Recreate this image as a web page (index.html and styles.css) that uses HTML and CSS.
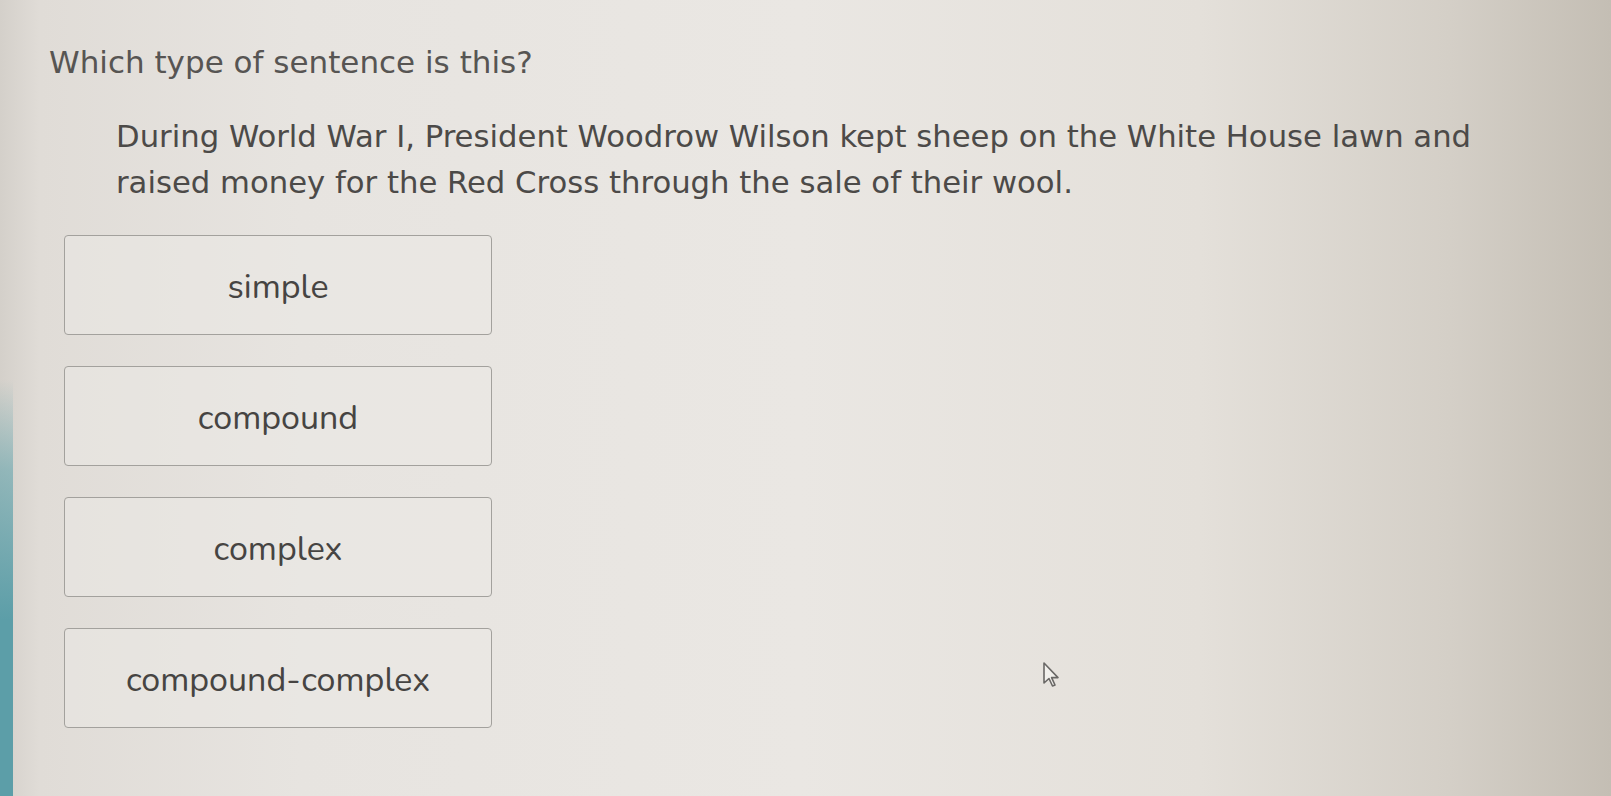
FILE: index.html
```html
<!DOCTYPE html>
<html lang="en">
<head>
<meta charset="utf-8">
<title>Which type of sentence is this?</title>
<link rel="stylesheet" href="styles.css">
</head>
<body>
<main class="question">
  <h1 class="prompt">Which type of sentence is this?</h1>
  <p class="passage">During World War I, President Woodrow Wilson kept sheep on the White House lawn and raised money for the Red Cross through the sale of their wool.</p>
  <div class="choices">
    <button class="choice">simple</button>
    <button class="choice">compound</button>
    <button class="choice">complex</button>
    <button class="choice">compound-complex</button>
  </div>
</main>
<svg class="cursor" width="18" height="28" viewBox="0 0 18 28" aria-hidden="true">
  <path d="M2 2 L2 22 L7 17.5 L10.5 25 L13 24 L9.6 16.6 L16 16.6 Z" fill="#f2f0ec" stroke="#6a6866" stroke-width="1.6" stroke-linejoin="round"/>
</svg>
</body>
</html>
```
FILE: styles.css
```css
html, body {
  margin: 0;
  height: 100%;
}

body {
  position: relative;
  overflow: hidden;
  background:
    linear-gradient(to bottom, rgba(90,160,170,0) 380px, rgba(90,160,170,0.55) 470px, #5c9ea8 620px) left top / 13px 100% no-repeat,
    linear-gradient(to right, #d4d0ca 0px, #e0dcd7 40px, #e7e4e0 300px, #eae7e3 800px, #e4e0da 1200px, #d4cfc7 1450px, #c4beb4 1611px);
  font-family: "DejaVu Sans", Verdana, sans-serif;
  color: #555350;
}

.question {
  padding: 44px 0 0 49px;
}

.prompt {
  margin: 0;
  font-size: 31px;
  font-weight: normal;
  line-height: 36px;
  color: #575553;
}

.passage {
  margin: 34px 0 0 67px;
  max-width: 1400px;
  font-size: 30.7px;
  line-height: 46px;
  color: #4c4a48;
}

.choices {
  display: flex;
  flex-direction: column;
  gap: 31px;
  margin: 29px 0 0 15px;
}

.choice {
  width: 428px;
  height: 100px;
  padding: 4px 0 0;
  background: rgba(236, 233, 229, 0.5);
  border: 1.5px solid #a3a19d;
  border-radius: 4px;
  font-family: "Nunito", "Open Sans", sans-serif;
  font-size: 34px;
  color: #464442;
  text-align: center;
  cursor: default;
}

.cursor {
  position: absolute;
  left: 1042px;
  top: 661px;
}
```
